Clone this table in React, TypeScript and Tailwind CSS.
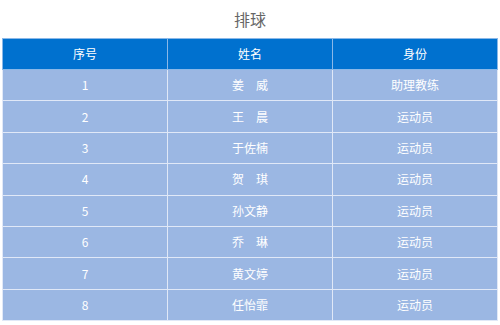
import React from "react";

const players = [
    { no: 1, name: "姜　威", role: "助理教练" },
    { no: 2, name: "王　晨", role: "运动员" },
    { no: 3, name: "于佐楠", role: "运动员" },
    { no: 4, name: "贺　琪", role: "运动员" },
    { no: 5, name: "孙文静", role: "运动员" },
    { no: 6, name: "乔　琳", role: "运动员" },
    { no: 7, name: "黄文婷", role: "运动员" },
    { no: 8, name: "任怡霏", role: "运动员" },
];

function App() {
    return (
        <div className="w-[500px] h-[325px] bg-white font-['Noto_Sans_CJK_SC',sans-serif]">
            <h1 className="h-[38px] pt-[7px] text-center text-[16px] leading-[24px] text-[#666666]">
                排球
            </h1>
            <div className="px-[2px]">
                <table className="w-full border-collapse table-fixed text-[12px] text-white">
                    <thead>
                        <tr className="h-[31px] bg-[#0071cf]">
                            <th className="font-normal border border-[#8ab8e8]">序号</th>
                            <th className="font-normal border border-[#8ab8e8]">姓名</th>
                            <th className="font-normal border border-[#8ab8e8]">身份</th>
                        </tr>
                    </thead>
                    <tbody>
                        {players.map((p) => (
                            <tr key={p.no} className="h-[31.4px] bg-[#9bb7e3]">
                                <td className="text-center border border-[#e0e8f7]">{p.no}</td>
                                <td className="text-center border border-[#e0e8f7]">{p.name}</td>
                                <td className="text-center border border-[#e0e8f7]">{p.role}</td>
                            </tr>
                        ))}
                    </tbody>
                </table>
            </div>
        </div>
    );
}

export default App;
